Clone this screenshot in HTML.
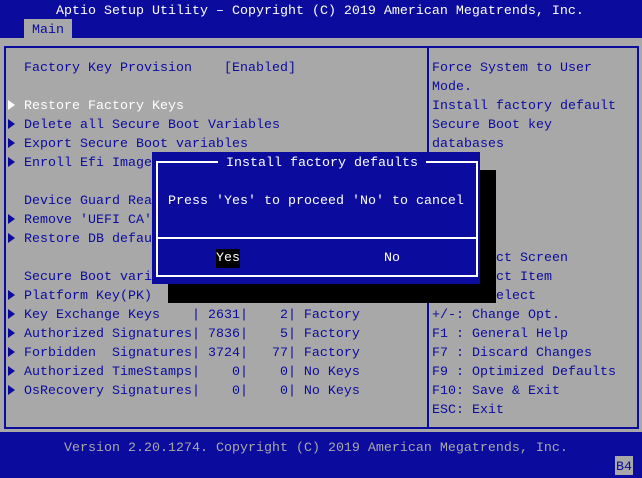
<!DOCTYPE html>
<html><head><meta charset="utf-8"><style>
*{margin:0;padding:0}
body{width:642px;height:478px;background:#a8a8a8;position:relative;overflow:hidden;font-family:"Liberation Mono","DejaVu Sans Mono",monospace;font-size:13.33px;}
.l{position:absolute;height:19px;line-height:19px;white-space:pre;color:#0b0b9e;margin-top:2px}
.w{color:#fff}
.g{color:#a8a8a8}
.tri{position:absolute;width:0;height:0;border-top:5px solid transparent;border-bottom:5px solid transparent;border-left:7px solid #0b0b9e;}
</style></head><body>
<div style="position:absolute;left:0;top:0;width:642px;height:38px;background:#0b0b9e"></div>
<div style="position:absolute;left:24px;top:19px;width:48px;height:19px;background:#a8a8a8"></div>
<div class="l w" style="left:56px;top:0">Aptio Setup Utility – Copyright (C) 2019 American Megatrends, Inc.</div>
<div class="l" style="left:32px;top:19px">Main</div>

<div style="position:absolute;left:4px;top:46px;width:631px;height:379px;border:2px solid #0b0b9e"></div>
<div style="position:absolute;left:427px;top:46px;width:2px;height:383px;background:#0b0b9e"></div>

<div class="l" style="left:24px;top:57px">Factory Key Provision    [Enabled]</div>
<div class="tri" style="left:8px;top:100px;border-left-color:#fff"></div>
<div class="l w" style="left:24px;top:95px">Restore Factory Keys</div>
<div class="tri" style="left:8px;top:119px"></div>
<div class="l" style="left:24px;top:114px">Delete all Secure Boot Variables</div>
<div class="tri" style="left:8px;top:138px"></div>
<div class="l" style="left:24px;top:133px">Export Secure Boot variables</div>
<div class="tri" style="left:8px;top:157px"></div>
<div class="l" style="left:24px;top:152px">Enroll Efi Image</div>
<div class="l" style="left:24px;top:190px">Device Guard Ready</div>
<div class="tri" style="left:8px;top:214px"></div>
<div class="l" style="left:24px;top:209px">Remove 'UEFI CA' from DB</div>
<div class="tri" style="left:8px;top:233px"></div>
<div class="l" style="left:24px;top:228px">Restore DB defaults</div>
<div class="l" style="left:24px;top:266px">Secure Boot variable | Size| Keys| Key Source</div>
<div class="tri" style="left:8px;top:290px"></div>
<div class="l" style="left:24px;top:285px">Platform Key(PK)     | 1560|    1| Factory</div>
<div class="tri" style="left:8px;top:309px"></div>
<div class="l" style="left:24px;top:304px">Key Exchange Keys    | 2631|    2| Factory</div>
<div class="tri" style="left:8px;top:328px"></div>
<div class="l" style="left:24px;top:323px">Authorized Signatures| 7836|    5| Factory</div>
<div class="tri" style="left:8px;top:347px"></div>
<div class="l" style="left:24px;top:342px">Forbidden  Signatures| 3724|   77| Factory</div>
<div class="tri" style="left:8px;top:366px"></div>
<div class="l" style="left:24px;top:361px">Authorized TimeStamps|    0|    0| No Keys</div>
<div class="tri" style="left:8px;top:385px"></div>
<div class="l" style="left:24px;top:380px">OsRecovery Signatures|    0|    0| No Keys</div>

<div class="l" style="left:432px;top:57px">Force System to User</div>
<div class="l" style="left:432px;top:76px">Mode.</div>
<div class="l" style="left:432px;top:95px">Install factory default</div>
<div class="l" style="left:432px;top:114px">Secure Boot key</div>
<div class="l" style="left:432px;top:133px">databases</div>
<div class="l" style="left:432px;top:247px">→←: Select Screen</div>
<div class="l" style="left:432px;top:266px">↑↓: Select Item</div>
<div class="l" style="left:432px;top:285px">Enter: Select</div>
<div class="l" style="left:432px;top:304px">+/-: Change Opt.</div>
<div class="l" style="left:432px;top:323px">F1 : General Help</div>
<div class="l" style="left:432px;top:342px">F7 : Discard Changes</div>
<div class="l" style="left:432px;top:361px">F9 : Optimized Defaults</div>
<div class="l" style="left:432px;top:380px">F10: Save &amp; Exit</div>
<div class="l" style="left:432px;top:399px">ESC: Exit</div>

<div style="position:absolute;left:0;top:432px;width:642px;height:46px;background:#0b0b9e"></div>
<div class="l g" style="left:64px;top:437px">Version 2.20.1274. Copyright (C) 2019 American Megatrends, Inc.</div>
<div style="position:absolute;left:615px;top:456px;width:18px;height:19px;background:#a8a8a8"></div>
<div class="l" style="left:616px;top:456px">B4</div>

<!-- dialog -->
<div style="position:absolute;left:168px;top:170px;width:328px;height:133px;background:#000"></div>
<div style="position:absolute;left:152px;top:152px;width:328px;height:132px;background:#0b0b9e"></div>
<div style="position:absolute;left:156px;top:161px;width:318px;height:112px;border:2px solid #fff"></div>
<div style="position:absolute;left:156px;top:237px;width:320px;height:2px;background:#fff"></div>
<div class="l w" style="left:218px;top:152px;background:#0b0b9e;padding:0 8px">Install factory defaults</div>
<div class="l w" style="left:168px;top:190px">Press 'Yes' to proceed 'No' to cancel</div>
<div class="l w" style="left:216px;top:247px;background:#000">Yes</div>
<div class="l w" style="left:384px;top:247px">No</div>
</body></html>
